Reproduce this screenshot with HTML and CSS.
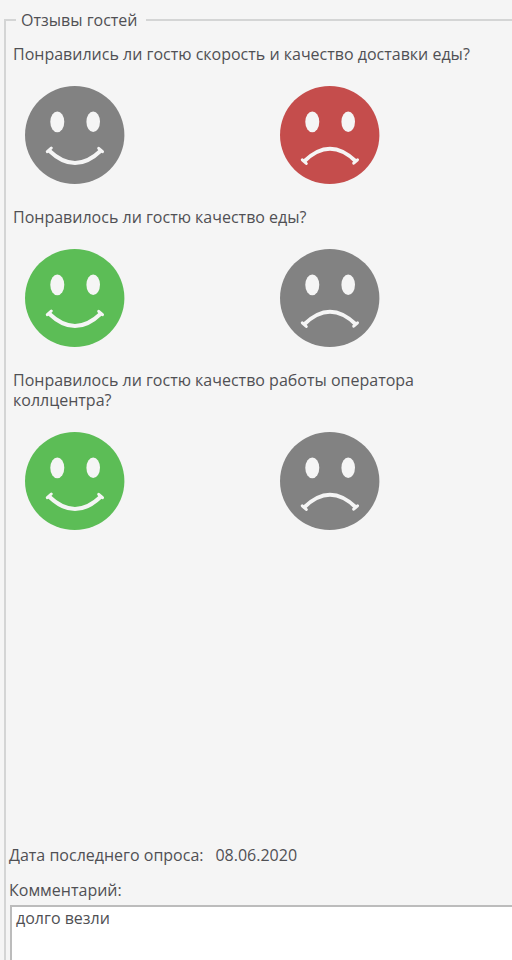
FILE: index.html
```html
<!DOCTYPE html>
<html lang="ru">
<head>
    <meta charset="UTF-8">
    <meta name="viewport" content="width=device-width, initial-scale=1.0">
    <title>Отзывы гостей</title>
    <link rel="stylesheet" href="styles.css">
</head>
<body>
    <!-- shared face drawings -->
    <svg class="sprite" aria-hidden="true">
        <symbol id="face-good" viewBox="0 0 100 98">
            <ellipse cx="49.7" cy="49" rx="49.7" ry="49"/>
            <ellipse class="eye" cx="32.3" cy="35.8" rx="7" ry="10.4"/>
            <ellipse class="eye" cx="68.2" cy="35.7" rx="6.8" ry="10.3"/>
            <path class="mouth" d="M24 64.5 Q50 89.5 76 64.5"/>
            <path class="corner" d="M22.3 65.7 L26.3 62 M73.7 62.3 L77.5 65.7"/>
        </symbol>
        <symbol id="face-bad" viewBox="0 0 100 98">
            <ellipse cx="49.7" cy="49" rx="49.7" ry="49"/>
            <ellipse class="eye" cx="32.3" cy="35.8" rx="7" ry="10.4"/>
            <ellipse class="eye" cx="68.2" cy="35.7" rx="6.8" ry="10.3"/>
            <path class="mouth" d="M24 75.5 Q50 50 76 75.5"/>
            <path class="corner" d="M22.3 73.8 L26.3 77.5 M73.7 77.2 L77.5 73.8"/>
        </symbol>
    </svg>

    <form class="page">
        <fieldset class="reviews">
            <legend>Отзывы гостей</legend>

            <div class="questions">
                <div class="question" role="radiogroup" aria-labelledby="q-delivery">
                    <p class="question-text" id="q-delivery">Понравились ли гостю скорость и качество доставки еды?</p>
                    <div class="faces">
                        <label class="face good">
                            <input type="radio" name="delivery" value="yes" aria-label="Да">
                            <svg><use href="#face-good"/></svg>
                        </label>
                        <label class="face bad">
                            <input type="radio" name="delivery" value="no" aria-label="Нет" checked>
                            <svg><use href="#face-bad"/></svg>
                        </label>
                    </div>
                </div>

                <div class="question" role="radiogroup" aria-labelledby="q-food">
                    <p class="question-text" id="q-food">Понравилось ли гостю качество еды?</p>
                    <div class="faces">
                        <label class="face good">
                            <input type="radio" name="food" value="yes" aria-label="Да" checked>
                            <svg><use href="#face-good"/></svg>
                        </label>
                        <label class="face bad">
                            <input type="radio" name="food" value="no" aria-label="Нет">
                            <svg><use href="#face-bad"/></svg>
                        </label>
                    </div>
                </div>

                <div class="question" role="radiogroup" aria-labelledby="q-operator">
                    <p class="question-text" id="q-operator">Понравилось ли гостю качество работы оператора коллцентра?</p>
                    <div class="faces">
                        <label class="face good">
                            <input type="radio" name="operator" value="yes" aria-label="Да" checked>
                            <svg><use href="#face-good"/></svg>
                        </label>
                        <label class="face bad">
                            <input type="radio" name="operator" value="no" aria-label="Нет">
                            <svg><use href="#face-bad"/></svg>
                        </label>
                    </div>
                </div>
            </div>

            <div class="summary">
                <div class="survey-date">
                    <span>Дата последнего опроса:</span>
                    <time datetime="2020-06-08">08.06.2020</time>
                </div>
                <label class="comment-label" for="comment">Комментарий:</label>
                <textarea id="comment" class="comment">долго везли</textarea>
            </div>
        </fieldset>
    </form>
</body>
</html>
```
FILE: styles.css
```css
:root {
    --bg: #f5f5f5;
    --text: #505054;
    --line: #d4d5d5;
    --off: #828282;
    --good: #5cbd56;
    --bad: #c54d4c;
}

* {
    box-sizing: border-box;
    margin: 0;
    padding: 0;
}

body {
    background-color: var(--bg);
    color: var(--text);
    font-family: "Open Sans", "Noto Sans", sans-serif;
    font-size: 16px;
    line-height: 20px;
}

.sprite {
    position: absolute;
    width: 0;
    height: 0;
}

.page {
    padding: 10px 0 0 4px;
}

.reviews {
    min-width: 0;
    border: 2px solid var(--line);
    border-right: none;
    border-bottom: none;
}

.reviews legend {
    margin-left: 10px;
    padding: 0 8px 0 5px;
}

/* fills the window above the date and the comment */
.questions {
    min-height: calc(100vh - 145px);
}

.question {
    padding: 14px 8px 9px 7px;
}

.question-text {
    margin-bottom: 22px;
}

.faces {
    display: flex;
    gap: 155px;
    padding-left: 12px;
}

.face {
    position: relative;
    cursor: pointer;
}

.face input {
    position: absolute;
    inset: 0;
    opacity: 0;
    cursor: pointer;
}

.face svg {
    display: block;
    width: 100px;
    height: 98px;
    fill: var(--off);
}

.good input:checked + svg {
    fill: var(--good);
}

.bad input:checked + svg {
    fill: var(--bad);
}

.eye {
    fill: var(--bg);
}

.mouth,
.corner {
    fill: none;
    stroke: var(--bg);
    stroke-width: 4;
}

.corner {
    stroke-width: 3;
    stroke-linecap: round;
}

.summary {
    display: flex;
    flex-direction: column;
    padding-left: 3px;
}

.survey-date {
    display: flex;
    gap: 12px;
    margin-bottom: 15px;
}

.comment-label {
    margin-bottom: 5px;
}

.comment {
    display: block;
    height: 55px;
    margin-left: 1px;
    padding: 1px 4px;
    border: 2px solid #bcbcbc;
    border-right: none;
    border-bottom: none;
    background-color: #fff;
    color: inherit;
    font: inherit;
    resize: none;
    outline: none;
}
```
